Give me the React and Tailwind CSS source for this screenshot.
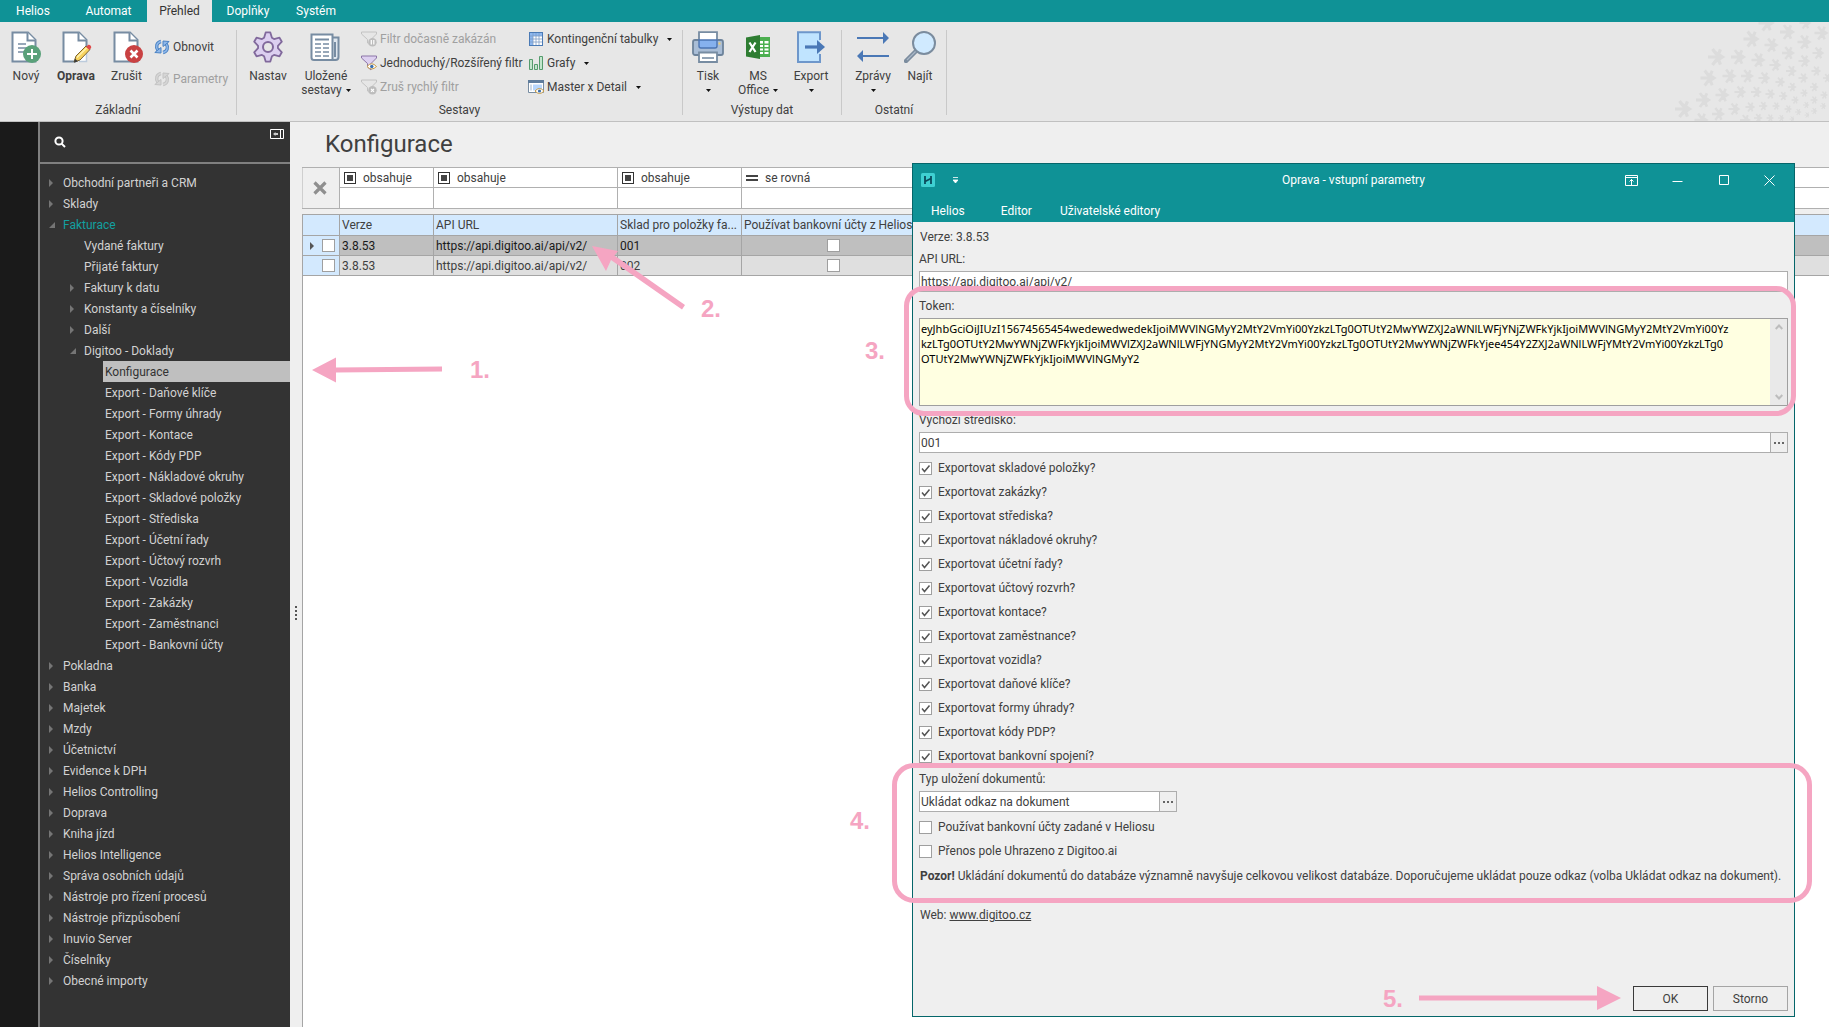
import React from "react";

const TEAL = "bg-[#0f9296]";

/* ---------- ribbon icons ---------- */

function PageShape() {
  return (
    <>
      <path d="M1.5 1.5H17L24.5 9V30.5H1.5Z" fill="#fff" stroke="#778ca2" strokeWidth="2" />
      <path d="M16.5 1.5V9.5H24.5" fill="#fff" stroke="#778ca2" strokeWidth="2" />
    </>
  );
}

function NewIcon() {
  return (
    <svg className="h-8 w-8" viewBox="-1 0 32 32">
      <PageShape />
      <path d="M7 13h8M7 17h12M7 21h6" stroke="#778ca2" strokeWidth="1.6" />
      <circle cx="21" cy="23" r="9" fill="#5aa17a" />
      <path d="M21 18v10M16 23h10" stroke="#fff" strokeWidth="2" />
    </svg>
  );
}

function EditIcon() {
  return (
    <svg className="h-8 w-8" viewBox="-2 0 32 32">
      <path d="M14 30.500H1.500V1.500H17L24.500 9V15" fill="#fff" stroke="#778ca2" strokeWidth="2" />
      <path d="M14 30H25V15Z" fill="#fff" />
      <path d="M16.500 1.500V9.500H24.500" fill="#fff" stroke="#778ca2" strokeWidth="2" />
      <path d="M17 30.500h7.500V20" fill="none" stroke="#bccbdc" strokeWidth="1.500" />
      <path d="M12 31L14 25 24 15 28 18.500 18 29Z" fill="#f7d35e" stroke="#7a6230" strokeWidth="1" />
      <path d="M15 26.500L25 16.500" stroke="#fff2b0" strokeWidth="1.500" />
      <path d="M12 31.500l1-4 3 3z" fill="#3b3b3b" />
      <path d="M24 16l2-2c1-1 4 1 3 3l-1.500 2z" fill="#e04848" />
    </svg>
  );
}

function DeleteIcon() {
  return (
    <svg className="h-8 w-8" viewBox="-2 0 32 32">
      <PageShape />
      <circle cx="21" cy="23" r="9" fill="#c94142" />
      <path d="M17.500 19.500l7 7M24.500 19.500l-7 7" stroke="#fff" strokeWidth="2.600" />
    </svg>
  );
}

function RefreshIcon({ muted }) {
  const a = muted ? "#c3c3c3" : "#4a82c3";
  const b = muted ? "#d6d6d6" : "#8fb8ea";
  return (
    <svg className="h-4 w-4 shrink-0" viewBox="0 0 16 16" fill="none">
      <path d="M7 2.500C2.500 3.500 1.500 8 4 11.500" stroke={a} strokeWidth="3.400" />
      <path d="M7 2.500C2.500 3.500 1.500 8 4 11.500" stroke={b} strokeWidth="1.400" />
      <path d="M.8 13.500L7 14V8.500Z" fill={b} stroke={a} />
      <path d="M9 13.500c4.500-1 5.500-5.500 3-9" stroke={a} strokeWidth="3.400" />
      <path d="M9 13.500c4.500-1 5.500-5.500 3-9" stroke={b} strokeWidth="1.400" />
      <path d="M15.200 2.500L9 2v5.500Z" fill={b} stroke={a} />
    </svg>
  );
}

const GEAR_OUTLINE = [0, 60, 120, 180, 240, 300]
  .flatMap((tooth) => [[-23, 10], [-9, 14.8], [9, 14.8], [23, 10]].map(([offset, radius]) => {
    const angle = ((tooth - 90 + offset) * Math.PI) / 180;
    return `${(16 + radius * Math.cos(angle)).toFixed(2)},${(16 + radius * Math.sin(angle)).toFixed(2)}`;
  }))
  .join(" ");

function GearIcon() {
  return (
    <svg className="h-8 w-8" viewBox="0 0 32 32">
      <polygon points={GEAR_OUTLINE} fill="#dccff0" stroke="#81699c" strokeWidth="1.800" strokeLinejoin="round" />
      <circle cx="16" cy="16" r="5" fill="#e7e7e7" stroke="#81699c" strokeWidth="2" />
    </svg>
  );
}

function ReportsIcon() {
  return (
    <svg className="h-8 w-8" viewBox="1 0 32 32">
      <path d="M22 6.500H29.500V26c0 2-1 3-3 3H6" fill="#dfe6ee" stroke="#778ca2" strokeWidth="2" />
      <path d="M2.500 3.500H23.500V29H5c-1.500 0-2.500-1-2.500-2.500Z" fill="#fff" stroke="#778ca2" strokeWidth="2" />
      <path d="M6 8.500h14" stroke="#778ca2" strokeWidth="2" />
      <path d="M6 13h6M14 13h6M6 17h6M14 17h6M6 21h6M14 21h6M6 25h6M14 25h6" stroke="#778ca2" strokeWidth="1.400" />
      <path d="M26 11v15" stroke="#778ca2" strokeWidth="2" />
    </svg>
  );
}

function FunnelIcon({ kind }) {
  const live = kind === "eye";
  return (
    <svg className="h-4 w-4 shrink-0" viewBox="0 0 16 16">
      <path d="M.5 1H15.500V3L10 8.500V15L6.500 12V8.500L.5 3Z" fill={live ? "#ddd0f0" : "#e6e6e6"} stroke={live ? "#8b74a6" : "#c2c2c2"} />
      {kind === "eye" && (
        <>
          <path d="M6 11.500Q10.500 6 15.500 11.500 10.500 16.500 6 11.500Z" fill="#fff" stroke="#c79a45" />
          <circle cx="10.800" cy="11.500" r="1.700" fill="#3b6fae" />
        </>
      )}
      {kind !== "eye" && <circle cx="11.500" cy="11.300" r="4.200" fill="#bdbdbd" />}
      {kind === "pause" && <path d="M10.300 9v4.500M12.800 9v4.500" stroke="#fff" strokeWidth="1.200" />}
      {kind === "cancel" && <path d="M10 9.800l3 3M13 9.800l-3 3" stroke="#fff" strokeWidth="1.200" />}
    </svg>
  );
}

function PivotIcon() {
  return (
    <svg className="h-4 w-4 shrink-0" viewBox="0 0 16 16">
      <rect x="1.500" y="1.500" width="13" height="13" fill="#fff" stroke="#4a7ab5" />
      <path d="M2 2h12v3H5v9H2z" fill="#8db8f0" />
      <path d="M5 2v12M8 2v12M11 2v12M2 5h12M2 8h12M2 11h12" stroke="#7d9dc4" strokeWidth=".8" />
    </svg>
  );
}

function ChartIcon() {
  return (
    <svg className="h-4 w-4 shrink-0" viewBox="0 0 16 16">
      <path d="M1.500 4.500h3v10h-3zM6.500 9.500h3v5h-3zM11.500 1.500h3v13h-3z" fill="#c3e6cd" stroke="#559b6d" />
    </svg>
  );
}

function MasterIcon() {
  return (
    <svg className="h-4 w-4 shrink-0" viewBox="0 0 16 16">
      <path d="M.5 1.500h15v12H.5z" fill="#fff" stroke="#778ca2" />
      <path d="M0 1h16v3H0z" fill="#5f7c9c" />
      <path d="M5 5.500h9v6H5z" fill="#b8d6fb" />
      <path d="M3 5.500v6" stroke="#9db3cc" />
      <path d="M7 12q4.500-5 9 0-4.500 5-9 0Z" fill="#fff" stroke="#c79a45" />
      <circle cx="11.500" cy="12" r="1.600" fill="#3b6fae" />
    </svg>
  );
}

function PrintIcon() {
  return (
    <svg className="h-8 w-8" viewBox="0 0 32 32">
      <rect x="1" y="9" width="30" height="15" rx="2" fill="#a9bdd6" stroke="#6d839b" strokeWidth="1.800" />
      <path d="M7 9V1.200H25V9" fill="#fff" stroke="#778ca2" strokeWidth="1.800" />
      <path d="M7 9H25V15q0 2-2 2H9q-2 0-2-2Z" fill="#86b1ee" stroke="#4b74b3" strokeWidth="1.400" />
      <path d="M26.500 12.500h2" stroke="#f3cf6d" strokeWidth="2" />
      <path d="M7 21.500H25V31H7Z" fill="#fff" stroke="#778ca2" strokeWidth="1.800" />
      <path d="M10 27h12" stroke="#778ca2" strokeWidth="1.600" />
    </svg>
  );
}

function ExcelIcon() {
  return (
    <svg className="h-8 w-8" viewBox="0 0 32 32">
      <rect x="15" y="6" width="13" height="20" fill="#4caf50" />
      <path d="M18 10h3v2.500h-3zM22.500 10h4v2.500h-4zM18 14h3v2h-3zM22.500 14h4v2h-4zM18 17.500h3v2h-3zM22.500 17.500h4v2h-4zM18 21h3v2h-3zM22.500 21h4v2h-4z" fill="#fff" />
      <path d="M4 6.500L18 4V28L4 25.500Z" fill="#2e7d32" />
      <path d="M7.500 11.500l6 9.500M13.500 11.500l-6 9.500" stroke="#fff" strokeWidth="2.200" />
    </svg>
  );
}

function ExportIcon() {
  return (
    <svg className="h-8 w-8" viewBox="0 0 32 32">
      <path d="M25 9V1.200H3V31H25V23" fill="#c0e4ff" stroke="#6e97cb" strokeWidth="2" />
      <path d="M10 16h14" stroke="#4a78b6" strokeWidth="3.200" />
      <path d="M22 9L30 16 22 23Z" fill="#4a78b6" />
    </svg>
  );
}

function MessagesIcon() {
  return (
    <svg className="h-8 w-8" viewBox="0 0 32 32">
      <path d="M0 7h27M5 25h27" stroke="#4a78b6" strokeWidth="2" />
      <path d="M26 1L32 7 26 13ZM6 19L0 25 6 31Z" fill="#4a78b6" />
    </svg>
  );
}

function FindIcon() {
  return (
    <svg className="h-8 w-8" viewBox="0 0 32 32">
      <path d="M12 20L2 30" stroke="#7b8c9e" strokeWidth="4.500" strokeLinecap="round" />
      <path d="M12 20L3 29" stroke="#a9b7c6" strokeWidth="1.200" />
      <circle cx="20" cy="12" r="11" fill="#d0eaff" stroke="#7b8c9e" strokeWidth="2" />
    </svg>
  );
}

function Caret() {
  return (
    <svg className="h-[3px] w-[5px] shrink-0" viewBox="0 0 5 3">
      <path d="M0 0h5L2.500 3z" fill="#111" />
    </svg>
  );
}

/* Pale flakes in the right-hand corner of the ribbon: x, y, size */
const FLAKES = [
  [166, 1, 15], [205, 1, 11], [187, 10, 14], [221, 11, 13], [151, 17, 15], [171, 23, 13], [204, 20, 13],
  [116, 35, 16], [138, 35, 14], [158, 38, 13], [188, 31, 12], [218, 31, 11], [204, 39, 11], [175, 43, 11],
  [108, 56, 15], [129, 54, 13], [147, 54, 12], [164, 56, 11], [191, 49, 10], [216, 49, 9], [180, 60, 9],
  [203, 56, 9], [227, 56, 8], [103, 78, 14], [122, 73, 13], [140, 70, 11], [156, 70, 10], [170, 72, 9],
  [192, 65, 8], [214, 65, 8], [183, 74, 8], [204, 71, 7], [224, 73, 7], [83, 87, 16], [195, 78, 7],
  [214, 78, 7], [134, 87, 11], [150, 85, 9], [163, 84, 8], [176, 84, 7], [188, 87, 7], [118, 92, 12],
  [206, 83, 6], [223, 84, 6], [198, 90, 6], [214, 89, 6], [101, 98, 13], [145, 98, 10], [158, 96, 8],
  [170, 96, 7], [181, 96, 6], [207, 93, 5], [192, 97, 5],
];

function FlakePattern() {
  return (
    <svg className="absolute right-0 top-0 h-[99px] w-[229px]" viewBox="0 0 229 99" aria-hidden="true">
      <defs>
        <g id="flake" fill="none" stroke="#dcdcdc" strokeWidth=".2">
          <path d="M-.5 0H.3M-.1-.32L.4 0-.1 .32M-.22-.5L.08-.1M-.22 .5L.08 .1M.28-.48L.14-.14M.28 .48L.14 .14" />
        </g>
      </defs>
      {FLAKES.map(([x, y, s], i) => (
        <use key={i} href="#flake" transform={`translate(${x} ${y}) scale(${s})`} />
      ))}
    </svg>
  );
}

/* ---------- ribbon ---------- */

function BigButton({ icon, label, second, caret, bold, className }) {
  return (
    <button type="button" className={`flex flex-col items-center ${className}`}>
      {icon}
      <span className={`mt-[5px] leading-4 ${bold ? "font-bold" : ""}`}>{label}</span>
      {(second || caret) && (
        <span className="flex h-3 items-center gap-1 whitespace-nowrap leading-3">
          {second}
          {caret && <Caret />}
        </span>
      )}
    </button>
  );
}

function SmallButton({ icon, label, caret, muted }) {
  return (
    <button type="button" disabled={muted} className={`flex h-4 items-center gap-[3px] whitespace-nowrap leading-4 ${muted ? "text-[#a0a0a0]" : ""}`}>
      {icon}
      <span>{label}</span>
      {caret && (
        <span className="ml-1.5">
          <Caret />
        </span>
      )}
    </button>
  );
}

function Group({ title, className, children }) {
  return (
    <section className={`flex flex-col justify-between border-r border-[#c9c9c9] ${className}`}>
      <div className="flex pt-px">{children}</div>
      <h2 className="text-center leading-[10px]">{title}</h2>
    </section>
  );
}

function Ribbon() {
  return (
    <header>
      <nav className={`flex h-[22px] text-white ${TEAL}`}>
        <button type="button" className="w-[66px]">Helios</button>
        <button type="button" className="ml-1 w-[77px]">Automat</button>
        <button type="button" className="w-[65px] bg-[#e7e7e7] text-[#333]">Přehled</button>
        <button type="button" className="w-[72px]">Doplňky</button>
        <button type="button" className="w-16">Systém</button>
      </nav>
      <div className="relative flex h-[100px] border-b border-[#c0c0c0] bg-[#e7e7e7] pb-1.5 pt-2">
        <FlakePattern />
        <Group title="Základní" className="w-[237px]">
          <BigButton className="ml-px w-[50px]" icon={<NewIcon />} label="Nový" />
          <BigButton className="w-[50px]" icon={<EditIcon />} label="Oprava" bold />
          <BigButton className="w-[51px]" icon={<DeleteIcon />} label="Zrušit" />
          <div className="ml-0.5 mt-2 flex flex-col gap-4">
            <SmallButton icon={<RefreshIcon />} label="Obnovit" />
            <SmallButton icon={<RefreshIcon muted />} label="Parametry" muted />
          </div>
        </Group>
        <Group title="Sestavy" className="w-[446px]">
          <BigButton className="ml-[3px] w-14" icon={<GearIcon />} label="Nastav" />
          <BigButton className="w-[60px]" icon={<ReportsIcon />} label="Uložené" second="sestavy" caret />
          <div className="ml-[5px] flex w-[167px] flex-col gap-2">
            <SmallButton icon={<FunnelIcon kind="pause" />} label="Filtr dočasně zakázán" muted />
            <SmallButton icon={<FunnelIcon kind="eye" />} label="Jednoduchý/Rozšířený filtr" />
            <SmallButton icon={<FunnelIcon kind="cancel" />} label="Zruš rychlý filtr" muted />
          </div>
          <div className="flex flex-col gap-2">
            <SmallButton icon={<PivotIcon />} label="Kontingenční tabulky" caret />
            <SmallButton icon={<ChartIcon />} label="Grafy" caret />
            <SmallButton icon={<MasterIcon />} label="Master x Detail" caret />
          </div>
        </Group>
        <Group title="Výstupy dat" className="w-[159px]">
          <BigButton className="w-[50px]" icon={<PrintIcon />} label="Tisk" caret />
          <BigButton className="w-[50px]" icon={<ExcelIcon />} label="MS" second="Office" caret />
          <BigButton className="w-14" icon={<ExportIcon />} label="Export" caret />
        </Group>
        <Group title="Ostatní" className="w-[105px]">
          <BigButton className="ml-1 w-[54px]" icon={<MessagesIcon />} label="Zprávy" caret />
          <BigButton className="w-10" icon={<FindIcon />} label="Najít" />
        </Group>
      </div>
    </header>
  );
}

/* ---------- sidebar ---------- */

const TREE = [
  [0, "Obchodní partneři a CRM", "closed"],
  [0, "Sklady", "closed"],
  [0, "Fakturace", "open"],
  [1, "Vydané faktury"],
  [1, "Přijaté faktury"],
  [1, "Faktury k datu", "closed"],
  [1, "Konstanty a číselníky", "closed"],
  [1, "Další", "closed"],
  [1, "Digitoo - Doklady", "open"],
  [2, "Konfigurace"],
  [2, "Export - Daňové klíče"],
  [2, "Export - Formy úhrady"],
  [2, "Export - Kontace"],
  [2, "Export - Kódy PDP"],
  [2, "Export - Nákladové okruhy"],
  [2, "Export - Skladové položky"],
  [2, "Export - Střediska"],
  [2, "Export - Účetní řady"],
  [2, "Export - Účtový rozvrh"],
  [2, "Export - Vozidla"],
  [2, "Export - Zakázky"],
  [2, "Export - Zaměstnanci"],
  [2, "Export - Bankovní účty"],
  [0, "Pokladna", "closed"],
  [0, "Banka", "closed"],
  [0, "Majetek", "closed"],
  [0, "Mzdy", "closed"],
  [0, "Účetnictví", "closed"],
  [0, "Evidence k DPH", "closed"],
  [0, "Helios Controlling", "closed"],
  [0, "Doprava", "closed"],
  [0, "Kniha jízd", "closed"],
  [0, "Helios Intelligence", "closed"],
  [0, "Správa osobních údajů", "closed"],
  [0, "Nástroje pro řízení procesů", "closed"],
  [0, "Nástroje přizpůsobení", "closed"],
  [0, "Inuvio Server", "closed"],
  [0, "Číselníky", "closed"],
  [0, "Obecné importy", "closed"],
];

const INDENT = ["pl-[7px]", "pl-7", "pl-[49px]"];

function TreeRow({ level, label, state }) {
  const selected = label === "Konfigurace";
  const color = selected ? "text-[#333]" : label === "Fakturace" ? "text-[#12a0a0]" : "text-[#d2d2d2]";
  return (
    <li className={`flex ${INDENT[level]}`}>
      <button type="button" className={`flex h-[21px] flex-1 items-center text-left ${color}`}>
        <span className="flex h-full w-3.5 items-center">
          {state === "closed" && (
            <svg className="ml-0.5 h-2 w-1" viewBox="0 0 4 8"><path d="M0 0l4 4-4 4z" fill="#757575" /></svg>
          )}
          {state === "open" && (
            <svg className="ml-0.5 h-1.5 w-1.5" viewBox="0 0 6 6"><path d="M6 0v6H0z" fill="#757575" /></svg>
          )}
        </span>
        <span className={`flex h-full flex-1 items-center whitespace-nowrap pl-0.5 ${selected ? "bg-[#bfbfbf]" : ""}`}>{label}</span>
      </button>
    </li>
  );
}

function Sidebar() {
  return (
    <aside className="flex w-[290px] shrink-0 bg-[#1a1a1a]">
      <div className="ml-[38px] flex-1 border-l-2 border-[#808080] bg-[#333]">
        <div className="flex h-[42px] justify-between border-b-2 border-[#808080] pl-3.5 pr-1.5">
          <button type="button" aria-label="Hledat" className="mt-2.5 h-5 w-3.5">
            <svg className="h-3 w-3" viewBox="0 0 12 12" fill="none" stroke="#fff" strokeWidth="2">
              <circle cx="5" cy="5" r="3.600" />
              <path d="M7.600 7.600L11 11" />
            </svg>
          </button>
          <button type="button" aria-label="Skrýt panel" className="mt-[7px] h-2.5 w-3.5">
            <svg className="h-2.5 w-3.5" viewBox="0 0 14 10" fill="none" stroke="#fff">
              <path d="M.5 .5h13v9H.5zM10.500 1v8" />
              <path d="M8 5H4" strokeWidth="2" stroke="#ccc" />
              <path d="M3 5l2.500-2v4z" fill="#ccc" stroke="none" />
            </svg>
          </button>
        </div>
        <ul className="pt-2">
          {TREE.map(([level, label, state]) => (
            <TreeRow key={label} level={level} label={label} state={state} />
          ))}
        </ul>
      </div>
    </aside>
  );
}

/* ---------- records grid ---------- */

const COLUMNS = "grid grid-cols-[37px_94px_184px_124px_1fr]";

function ContainsMark() {
  return (
    <span className="flex h-3 w-3 items-center justify-center border border-[#333]">
      <span className="h-1.5 w-1.5 bg-[#444]" />
    </span>
  );
}

function FilterCell({ label, name, equals }) {
  return (
    <div className="border-l border-[#b0b0b0]">
      <button type="button" className="flex h-5 w-full items-center gap-[7px] border-b border-[#b0b0b0] pl-1">
        {equals ? <span className="h-1.5 w-3 border-y-2 border-[#444]" /> : <ContainsMark />}
        <span className="leading-4">{label}</span>
      </button>
      <input aria-label={name} className="block h-5 w-full bg-white px-1 outline-none" />
    </div>
  );
}

const RECORDS = [
  { version: "3.8.53", url: "https://api.digitoo.ai/api/v2/", store: "001", active: true },
  { version: "3.8.53", url: "https://api.digitoo.ai/api/v2/", store: "002" },
];

function PlainCheck({ label }) {
  return <input type="checkbox" aria-label={label} className="block h-[13px] w-[13px] appearance-none border border-[#9f9f9f] bg-white" />;
}

function RecordsGrid() {
  const th = "h-[21px] overflow-hidden text-ellipsis whitespace-nowrap border-b border-r border-[#a5a5a5] pl-0.5 text-left font-normal";
  const td = "h-5 border-b border-r border-[#a5a5a5] pl-0.5";
  return (
    <main className="flex min-w-0 flex-1 flex-col bg-[#efefef]">
      <h1 className="pl-[23px] pt-1.5 text-2xl leading-8">Konfigurace</h1>
      <div className={`mt-[7px] border-y border-[#b0b0b0] bg-white ${COLUMNS}`}>
        <button type="button" aria-label="Zrušit filtr" className="flex items-center justify-center border-l border-[#cfcfcf] bg-[#efefef] pr-0.5">
          <svg className="h-3.5 w-3.5" viewBox="0 0 14 14"><path d="M1.500 1.500l11 11M12.500 1.500l-11 11" stroke="#8f8f8f" strokeWidth="3.200" /></svg>
        </button>
        <FilterCell label="obsahuje" name="Verze" />
        <FilterCell label="obsahuje" name="API URL" />
        <FilterCell label="obsahuje" name="Sklad" />
        <FilterCell label="se rovná" name="Bankovní účty" equals />
      </div>
      <div className="mt-[5px] flex-1 border-l border-t border-[#a5a5a5] bg-white">
        <table className="w-full table-fixed border-separate border-spacing-0">
          <colgroup>
            <col className="w-[37px]" />
            <col className="w-[94px]" />
            <col className="w-[184px]" />
            <col className="w-[124px]" />
            <col className="w-[182px]" />
            <col />
          </colgroup>
          <thead className="bg-[#d3e9fe]">
            <tr>
              <th className={th} />
              <th className={th}>Verze</th>
              <th className={th}>API URL</th>
              <th className={th}>Sklad pro položky fa...</th>
              <th className={th}>Používat bankovní účty z Helios</th>
              <th className="h-[21px] border-b border-[#a5a5a5]" />
            </tr>
          </thead>
          <tbody>
            {RECORDS.map((r) => (
              <tr key={r.store} className={r.active ? "bg-[#bfbfbf] text-[#1a1a1a]" : "bg-[#dfdfdf]"}>
                <td className={`${td} bg-[#d3e9fe]`}>
                  <div className="flex items-center justify-end gap-2 pr-1">
                    {r.active && (
                      <svg className="h-2 w-1" viewBox="0 0 4 8"><path d="M0 0l4 4-4 4z" fill="#555" /></svg>
                    )}
                    <PlainCheck label={`Vybrat ${r.store}`} />
                  </div>
                </td>
                <td className={td}>{r.version}</td>
                <td className={td}>{r.url}</td>
                <td className={td}>{r.store}</td>
                <td className={td}>
                  <div className="flex justify-center"><PlainCheck label={`Bankovní účty ${r.store}`} /></div>
                </td>
                <td className="h-5 border-b border-[#a5a5a5]" />
              </tr>
            ))}
          </tbody>
        </table>
      </div>
    </main>
  );
}

/* ---------- edit dialog ---------- */

const TOKEN = [
  "eyJhbGciOiJIUzI15674565454wedewedwedekIjoiMWVlNGMyY2MtY2VmYi00YzkzLTg0OTUtY2MwYWZXJ2aWNlLWFjYNjZWFkYjkIjoiMWVlNGMyY2MtY2VmYi00Yz",
  "kzLTg0OTUtY2MwYWNjZWFkYjkIjoiMWVlZXJ2aWNlLWFjYNGMyY2MtY2VmYi00YzkzLTg0OTUtY2MwYWNjZWFkYjee454Y2ZXJ2aWNlLWFjYMtY2VmYi00YzkzLTg0",
  "OTUtY2MwYWNjZWFkYjkIjoiMWVlNGMyY2",
].join("\n");

const EXPORTS = [
  "Exportovat skladové položky?",
  "Exportovat zakázky?",
  "Exportovat střediska?",
  "Exportovat nákladové okruhy?",
  "Exportovat účetní řady?",
  "Exportovat účtový rozvrh?",
  "Exportovat kontace?",
  "Exportovat zaměstnance?",
  "Exportovat vozidla?",
  "Exportovat daňové klíče?",
  "Exportovat formy úhrady?",
  "Exportovat kódy PDP?",
  "Exportovat bankovní spojení?",
];

function CheckRow({ label, checked }) {
  return (
    <label className="flex h-6 w-fit items-center gap-1.5">
      <span className="grid">
        <input type="checkbox" defaultChecked={checked} className="peer col-start-1 row-start-1 h-[13px] w-[13px] appearance-none border border-[#9f9f9f] bg-white" />
        <svg className="pointer-events-none invisible col-start-1 row-start-1 h-[13px] w-[13px] peer-checked:visible" viewBox="0 0 13 13" fill="none">
          <path d="M3 6.500l2.500 3 5-6" stroke="#555" strokeWidth="1.500" />
        </svg>
      </span>
      <span className="leading-4">{label}</span>
    </label>
  );
}

function LookupField({ id, value, className }) {
  return (
    <div className={`mt-1 flex h-[21px] border border-[#adadad] bg-white ${className}`}>
      <input id={id} defaultValue={value} className="min-w-0 flex-1 bg-transparent px-px outline-none" />
      <button type="button" aria-label="Vybrat" className="flex w-[17px] items-center justify-center gap-0.5 border-l border-[#adadad] bg-[#efefef]">
        <span className="h-0.5 w-0.5 bg-[#666]" />
        <span className="h-0.5 w-0.5 bg-[#666]" />
        <span className="h-0.5 w-0.5 bg-[#666]" />
      </button>
    </div>
  );
}

function StepNumber({ n, className }) {
  return <span className={`absolute font-['Liberation_Sans',sans-serif] text-2xl font-bold leading-6 text-[#f5a5c2] ${className}`}>{n}.</span>;
}

function WindowButton({ label, children }) {
  return (
    <button type="button" aria-label={label} className="flex h-8 w-[46px] items-center justify-center">
      <svg className="h-[13px] w-[13px]" viewBox="0 0 13 13" fill="none" stroke="#fff">{children}</svg>
    </button>
  );
}

function Dialog() {
  return (
    <div role="dialog" aria-label="Oprava - vstupní parametry" className="absolute bottom-2.5 left-[912px] right-[34px] top-[163px] flex flex-col border border-[#05666a] bg-[#efefef]">
      <div className={`flex h-[58px] flex-col justify-between text-white ${TEAL}`}>
        <div className="grid grid-cols-[1fr_auto_1fr] items-center">
          <div className="flex items-center pl-2">
            <svg className="h-3.5 w-3.5" viewBox="0 0 14 14">
              <rect width="14" height="14" rx="1.500" fill="#3fd0d2" />
              <path d="M4 3v8M10 3v8M4 8.500L10 5.500" stroke="#0b4b5c" strokeWidth="1.800" />
            </svg>
            <button type="button" aria-label="Panel rychlého přístupu" className="ml-[18px] h-4 w-2">
              <svg className="h-4 w-[5px]" viewBox="0 0 5 16"><path d="M0 5.500h5M0 8h5L2.500 11z" fill="#fff" stroke="#fff" strokeWidth=".8" /></svg>
            </button>
          </div>
          <span>Oprava - vstupní parametry</span>
          <div className="flex justify-end pr-0.5">
            <WindowButton label="Připnout"><path d="M.5 1.500h12v10H.5zM.5 3.500h12M6.500 11V5M4.500 7.500l2-2 2 2" /></WindowButton>
            <WindowButton label="Minimalizovat"><path d="M1.500 7.500h10" /></WindowButton>
            <WindowButton label="Maximalizovat"><path d="M2.500 1.500h9v9h-9z" /></WindowButton>
            <WindowButton label="Zavřít"><path d="M1.500 1.500l10 10M11.500 1.500l-10 10" /></WindowButton>
          </div>
        </div>
        <nav className="flex h-[22px] items-center gap-9 pl-[18px]">
          <button type="button">Helios</button>
          <button type="button">Editor</button>
          <button type="button" className="-ml-2">Uživatelské editory</button>
        </nav>
      </div>

      <form className="flex flex-1 flex-col px-1.5 pb-[5px] pt-[7px] leading-4" onSubmit={(e) => e.preventDefault()}>
        <p className="pl-px">Verze: 3.8.53</p>
        <label htmlFor="api" className="mt-1.5">API URL:</label>
        <input id="api" defaultValue="https://api.digitoo.ai/api/v2/" className="mt-1 h-[21px] border border-[#adadad] bg-white px-px leading-4 outline-none" />

        <div className="relative mt-1.5">
          <label htmlFor="token">Token:</label>
          <div className="mt-1 flex h-[88px] border border-[#9f9f9f] bg-[#ffffe1]">
            <textarea
              id="token"
              wrap="off"
              defaultValue={TOKEN}
              className="min-w-0 flex-1 resize-none overflow-hidden whitespace-pre px-px pt-0.5 font-['Noto_Sans',sans-serif] text-[11px] leading-[15px] text-black outline-none"
            />
            <div className="flex w-[17px] flex-col items-center justify-between bg-[#e9e9e9] py-1" aria-hidden="true">
              <svg className="h-2 w-2" viewBox="0 0 8 8" fill="none" stroke="#bdbdbd" strokeWidth="2"><path d="M.7 6L4 2.500 7.300 6" /></svg>
              <svg className="h-2 w-2" viewBox="0 0 8 8" fill="none" stroke="#bdbdbd" strokeWidth="2"><path d="M.7 2L4 5.500 7.300 2" /></svg>
            </div>
          </div>
          <div className="pointer-events-none absolute -bottom-2.5 -left-[15px] -right-2 -top-3 rounded-[20px] border-[5px] border-[#f5a5c2]" />
          <StepNumber n={3} className="-left-[54px] top-[41px]" />
        </div>

        <label htmlFor="center" className="mt-1.5">Výchozí středisko:</label>
        <LookupField id="center" value="001" className="" />

        <div className="mt-[3px]">
          {EXPORTS.map((label) => <CheckRow key={label} label={label} checked />)}
        </div>

        <div className="relative mt-[3px]">
          <label htmlFor="store" className="block">Typ uložení dokumentů:</label>
          <LookupField id="store" value="Ukládat odkaz na dokument" className="w-[258px]" />
          <div className="mt-[3px]">
            <CheckRow label="Používat bankovní účty zadané v Heliosu" />
            <CheckRow label="Přenos pole Uhrazeno z Digitoo.ai" />
          </div>
          <p className="mt-[5px] whitespace-nowrap pl-px">
            <b>Pozor!</b> Ukládání dokumentů do databáze významně navyšuje celkovou velikost databáze. Doporučujeme ukládat pouze odkaz (volba Ukládat odkaz na dokument).
          </p>
          <div className="pointer-events-none absolute -bottom-[19px] -left-[27px] -right-6 -top-2 rounded-[22px] border-[5px] border-[#f5a5c2]" />
          <StepNumber n={4} className="-left-[69px] top-[38px]" />
        </div>

        <p className="mt-[23px] pl-px">Web: <a href="#web" className="underline">www.digitoo.cz</a></p>

        <div className="relative mt-auto flex justify-end gap-[5px]">
          <StepNumber n={5} className="right-[385px] top-px" />
          <svg className="absolute right-[167px] top-0 h-6 w-[202px]" viewBox="0 0 202 24" aria-hidden="true">
            <path d="M0 9.500H178V0L202 12 178 24V14.500H0Z" fill="#f5a5c2" />
          </svg>
          <button type="submit" className="h-[25px] w-[75px] border border-[#3a3a3a]">OK</button>
          <button type="button" className="h-[25px] w-[75px] border border-[#a5a5a5]">Storno</button>
        </div>
      </form>
    </div>
  );
}

/* ---------- page ---------- */

export default function App() {
  return (
    <div className="relative flex min-h-screen flex-col overflow-hidden bg-[#efefef] font-['Roboto','Open_Sans',sans-serif] text-xs text-[#404040]">
      <Ribbon />
      <div className="flex flex-1">
        <Sidebar />
        <div className="flex w-3 shrink-0 flex-col items-center justify-center gap-0.5 pt-[77px]">
          <span className="h-0.5 w-0.5 bg-[#555]" />
          <span className="h-0.5 w-0.5 bg-[#555]" />
          <span className="h-0.5 w-0.5 bg-[#555]" />
          <span className="h-0.5 w-0.5 bg-[#555]" />
        </div>
        <RecordsGrid />
      </div>
      <svg className="pointer-events-none absolute left-[311px] top-[240px] h-[150px] w-[380px]" viewBox="0 0 380 150" aria-hidden="true">
        <path d="M1 130L25 117.500V127.500L131 126.500V131.500L25 132.500V142.500Z" fill="#f5a5c2" />
        <path d="M281 6L307 11 303.500 15.500 374 65 371 69.500 300 20 295 31Z" fill="#f5a5c2" />
      </svg>
      <StepNumber n={1} className="left-[470px] top-[358px]" />
      <StepNumber n={2} className="left-[701px] top-[297px]" />
      <Dialog />
    </div>
  );
}
